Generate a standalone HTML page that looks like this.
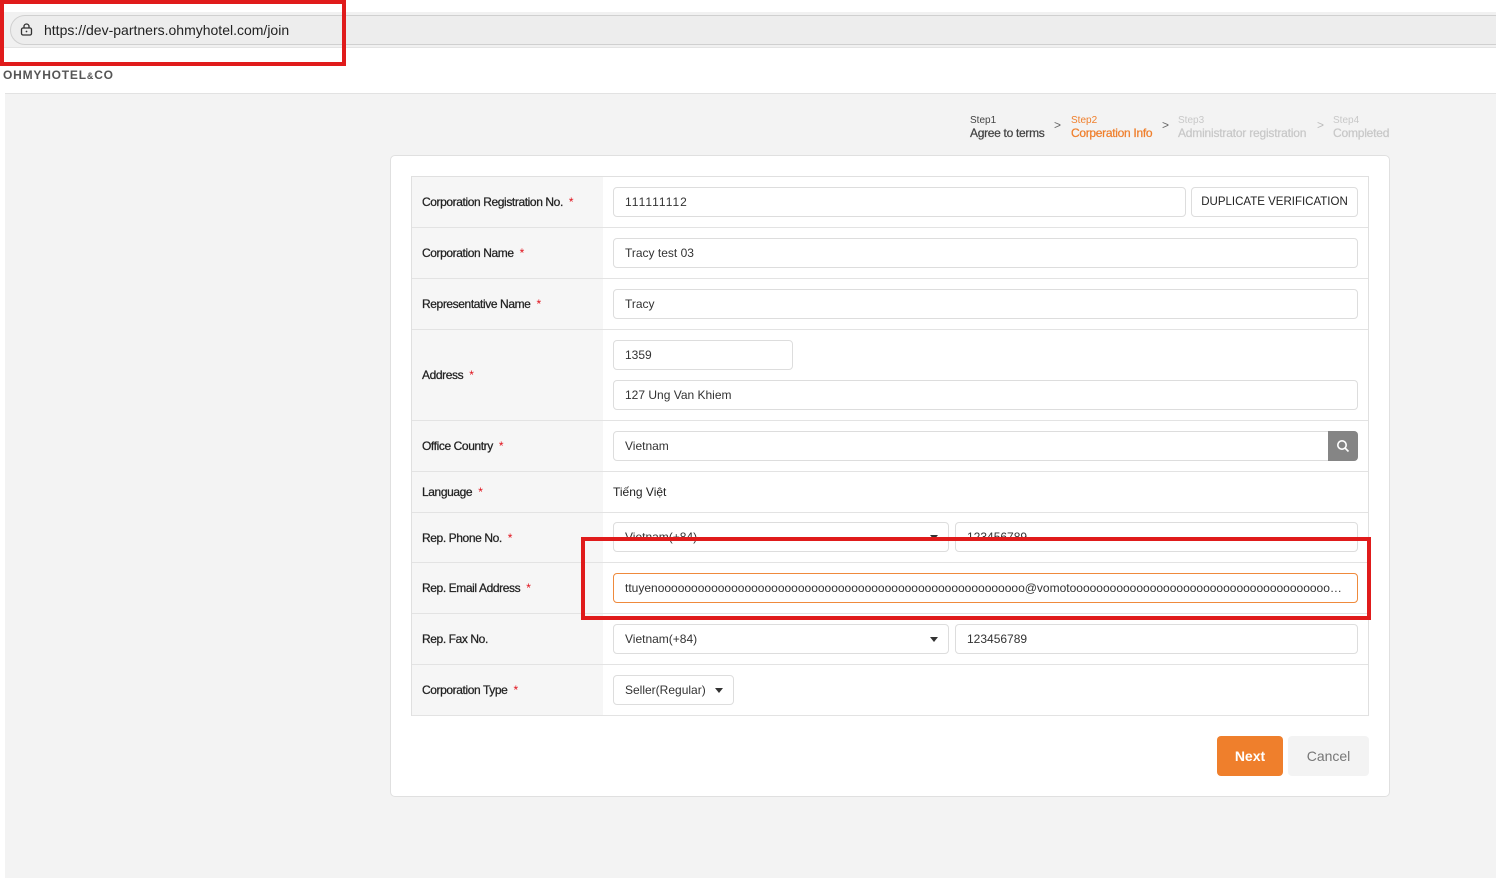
<!DOCTYPE html>
<html><head><meta charset="utf-8"><style>
*{box-sizing:border-box;margin:0;padding:0}
body{width:1496px;height:878px;overflow:hidden;background:#fff;font-family:"Liberation Sans",sans-serif;position:relative;color:#222}
.a{position:absolute}
.lbl{position:absolute;left:412px;width:191px;background:#f6f6f6;font-size:12px;letter-spacing:-0.4px;color:#222;padding-left:10px;display:flex;align-items:center;border-bottom:1px solid #e3e3e3;-webkit-text-stroke:0.25px #222}
.lbl b{color:#e0101a;font-weight:normal;margin-left:6px;-webkit-text-stroke:0}
.val{position:absolute;left:603px;width:765px;border-bottom:1px solid #e3e3e3}
.in{position:absolute;height:30px;border:1px solid #ddd;border-radius:4px;background:#fff;font-size:12px;color:#333;padding-left:11px;line-height:28px;white-space:nowrap;overflow:hidden}
.tri{position:absolute;width:0;height:0;border-left:4px solid transparent;border-right:4px solid transparent;border-top:5px solid #333}
.st{-webkit-text-stroke:0.25px currentColor}
</style></head><body>
<div class="a" style="left:0;top:12px;width:1496px;height:36px;background:#f1f1f1;border-bottom:1px solid #e4e4e4"></div>
<div class="a" style="left:10px;top:15px;width:1500px;height:30px;border:1px solid #d0d0d0;border-radius:15px;background:#ededed"></div>
<svg class="a" style="left:20px;top:23px" width="13" height="13" viewBox="0 0 13 13"><rect x="1.5" y="5" width="10" height="7" rx="1.5" fill="none" stroke="#333" stroke-width="1.3"/><path d="M4 5V3.5a2.5 2.5 0 0 1 5 0V5" fill="none" stroke="#333" stroke-width="1.3"/><circle cx="6.5" cy="8.5" r="0.9" fill="#333"/></svg>
<div class="a" style="left:44px;top:22px;font-size:14px;color:#222">https://dev-partners.ohmyhotel.com/join</div>
<div class="a" style="left:0;top:0;width:346px;height:66px;border:4px solid #e01b1b"></div>
<div class="a" style="left:3px;top:68px;font-size:12px;font-weight:bold;color:#555;letter-spacing:0.8px">OHMYHOTEL<span style="font-size:9px">&amp;</span>CO</div>
<div class="a" style="left:5px;top:93px;width:1491px;height:785px;background:#f3f3f3;border-top:1px solid #e2e2e2"></div>
<div class="a" style="left:970px;top:115px;font-size:10px;color:#444">Step1</div>
<div class="a st" style="left:970px;top:126px;font-size:12px;color:#444;letter-spacing:-0.3px">Agree to terms</div>
<div class="a" style="left:1054px;top:118px;font-size:12px;color:#666">&gt;</div>
<div class="a" style="left:1071px;top:115px;font-size:10px;color:#ef7f2c">Step2</div>
<div class="a st" style="left:1071px;top:126px;font-size:12px;color:#ef7f2c;letter-spacing:-0.3px">Corperation Info</div>
<div class="a" style="left:1162px;top:118px;font-size:12px;color:#666">&gt;</div>
<div class="a" style="left:1178px;top:115px;font-size:10px;color:#c8c8c8">Step3</div>
<div class="a st" style="left:1178px;top:126px;font-size:12px;color:#c8c8c8;letter-spacing:-0.2px">Administrator registration</div>
<div class="a" style="left:1317px;top:118px;font-size:12px;color:#bbb">&gt;</div>
<div class="a" style="left:1333px;top:115px;font-size:10px;color:#c8c8c8">Step4</div>
<div class="a st" style="left:1333px;top:126px;font-size:12px;color:#c8c8c8;letter-spacing:-0.2px">Completed</div>
<div class="a" style="left:390px;top:155px;width:1000px;height:642px;background:#fff;border:1px solid #e0e0e0;border-radius:5px"></div>
<div class="a" style="left:411px;top:176px;width:958px;height:540px;border:1px solid #e0e0e0;border-bottom:none"></div>
<div class="lbl" style="top:177px;height:51px">Corporation Registration No.<b>*</b></div><div class="val" style="top:177px;height:51px"></div>
<div class="lbl" style="top:228px;height:51px">Corporation Name<b>*</b></div><div class="val" style="top:228px;height:51px"></div>
<div class="lbl" style="top:279px;height:51px">Representative Name<b>*</b></div><div class="val" style="top:279px;height:51px"></div>
<div class="lbl" style="top:330px;height:91px">Address<b>*</b></div><div class="val" style="top:330px;height:91px"></div>
<div class="lbl" style="top:421px;height:51px">Office Country<b>*</b></div><div class="val" style="top:421px;height:51px"></div>
<div class="lbl" style="top:472px;height:41px">Language<b>*</b></div><div class="val" style="top:472px;height:41px"></div>
<div class="lbl" style="top:513px;height:50px">Rep. Phone No.<b>*</b></div><div class="val" style="top:513px;height:50px"></div>
<div class="lbl" style="top:563px;height:51px">Rep. Email Address<b>*</b></div><div class="val" style="top:563px;height:51px"></div>
<div class="lbl" style="top:614px;height:51px">Rep. Fax No.</div><div class="val" style="top:614px;height:51px"></div>
<div class="lbl" style="top:665px;height:51px">Corporation Type<b>*</b></div><div class="val" style="top:665px;height:51px"></div>
<div class="in" style="left:613px;top:187px;width:573px;letter-spacing:1px">111111112</div>
<div class="in" style="left:1191px;top:187px;width:167px;padding:0;text-align:center;color:#222;font-size:11.5px">DUPLICATE VERIFICATION</div>
<div class="in" style="left:613px;top:238px;width:745px">Tracy test 03</div>
<div class="in" style="left:613px;top:289px;width:745px">Tracy</div>
<div class="in" style="left:613px;top:340px;width:180px">1359</div>
<div class="in" style="left:613px;top:380px;width:745px">127 Ung Van Khiem</div>
<div class="in" style="left:613px;top:431px;width:745px">Vietnam</div>
<div class="a" style="left:1328px;top:431px;width:30px;height:30px;background:#858585;border-radius:0 4px 4px 0"></div>
<svg class="a" style="left:1336px;top:439px" width="14" height="14" viewBox="0 0 14 14"><circle cx="6" cy="6" r="4.2" fill="none" stroke="#fff" stroke-width="1.6"/><path d="M9 9l3.5 3.5" stroke="#fff" stroke-width="1.6"/></svg>
<div class="a" style="left:613px;top:485px;font-size:12px;color:#222">Tiếng Việt</div>
<div class="in" style="left:613px;top:522px;width:336px">Vietnam(+84)</div><div class="tri" style="left:930px;top:535px"></div>
<div class="in" style="left:955px;top:522px;width:403px">123456789</div>
<div class="in" style="left:613px;top:573px;width:745px;border-color:#ef8a3c;padding-right:14px;text-overflow:ellipsis">ttuyenooooooooooooooooooooooooooooooooooooooooooooooooooooooo@vomotooooooooooooooooooooooooooooooooooooooooooooooooooo</div>
<div class="in" style="left:613px;top:624px;width:336px">Vietnam(+84)</div><div class="tri" style="left:930px;top:637px"></div>
<div class="in" style="left:955px;top:624px;width:403px">123456789</div>
<div class="in" style="left:613px;top:675px;width:121px">Seller(Regular)</div><div class="tri" style="left:715px;top:688px"></div>
<div class="a" style="left:581px;top:537px;width:790px;height:83px;border:4px solid #e01b1b"></div>
<div class="a" style="left:1217px;top:736px;width:66px;height:40px;background:#ef7f2c;border-radius:4px;color:#fff;font-weight:bold;font-size:14px;text-align:center;line-height:40px">Next</div>
<div class="a" style="left:1288px;top:736px;width:81px;height:40px;background:#f3f3f3;border-radius:4px;color:#777;font-size:14px;text-align:center;line-height:40px">Cancel</div>
</body></html>
